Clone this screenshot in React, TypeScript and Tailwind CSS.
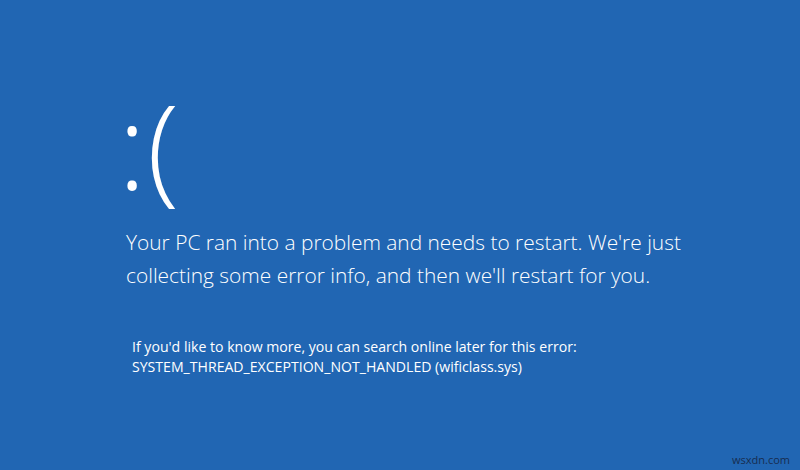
export default function App() {
  return (
    <div className="relative w-[800px] h-[470px] bg-[#2166b3] text-white overflow-hidden" style={{ fontFamily: '"Open Sans", "Noto Sans", sans-serif' }}>
      <div className="flex flex-col pl-[118px] pt-[75px]">
        <div className="text-[118px] leading-[140px] font-light tracking-[1px]">:(</div>
        <div className="mt-[11px] pl-[8px] text-[20.9px] leading-[33px] font-light">
          <div>Your PC ran into a problem and needs to restart. We're just</div>
          <div>collecting some error info, and then we'll restart for you.</div>
        </div>
        <div className="mt-[45px] pl-[14px] text-[14.1px] leading-[20px]">
          <div>If you'd like to know more, you can search online later for this error:</div>
          <div>SYSTEM_THREAD_EXCEPTION_NOT_HANDLED (wificlass.sys)</div>
        </div>
      </div>
      <div className="absolute right-[10px] bottom-[2px] text-[11px] text-[#172d50]">wsxdn.com</div>
    </div>
  );
}
